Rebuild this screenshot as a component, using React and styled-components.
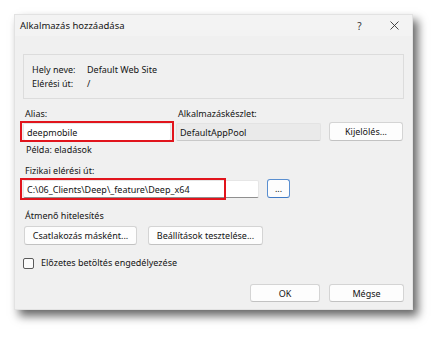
import React from "react";
import styled, { createGlobalStyle } from "styled-components";

const GlobalStyle = createGlobalStyle`
  html, body {
    margin: 0;
    padding: 0;
    background: #ffffff;
  }
  body {
    font-family: "Noto Sans", "Open Sans", sans-serif;
    font-size: 9px;
    color: #141414;
  }
`;

const Page = styled.div`
  width: 441px;
  height: 339px;
  padding: 14px 0 0 14px;
  box-sizing: border-box;
`;

const Dialog = styled.div`
  width: 399px;
  height: 296px;
  background: #f0f0f0;
  border: 1px solid #e2e2e2;
  box-sizing: border-box;
  box-shadow: 5px 6px 9px rgba(0, 0, 0, 0.6);
  display: flex;
  flex-direction: column;
`;

const TitleBar = styled.div`
  height: 21px;
  display: flex;
  align-items: center;
  padding-left: 5px;
  background: #f3f3f3;
`;

const Title = styled.div`
  flex: 1;
  font-size: 9.5px;
`;

const TitleButton = styled.div`
  width: 35px;
  height: 21px;
  display: flex;
  align-items: center;
  justify-content: center;
  font-size: 10px;
  color: #333;
`;

const Body = styled.div`
  padding: 18px 8px 0 8px;
  display: flex;
  flex-direction: column;
`;

const InfoBox = styled.div`
  border: 1px solid #dcdcdc;
  padding: 8px 8px 7px 8px;
`;

const InfoRow = styled.div`
  display: flex;
  line-height: 14px;
`;

const InfoLabel = styled.div`
  width: 55px;
`;

const Label = styled.div`
  line-height: 14px;
  padding-left: 2px;
  margin-top: ${(p) => p.$mt || 0}px;
`;

const FieldRow = styled.div`
  display: flex;
  align-items: flex-end;
  margin-top: ${(p) => p.$mt || 0}px;
  gap: ${(p) => p.$gap || 5}px;
`;

const Field = styled.div`
  width: ${(p) => p.$w}px;
  display: flex;
  flex-direction: column;
  gap: 2px;
`;

const Marked = styled.div`
  position: relative;
  width: ${(p) => p.$w}px;
`;

const Highlight = styled.div`
  position: absolute;
  left: -3px;
  top: -2px;
  width: ${(p) => p.$w}px;
  height: ${(p) => p.$h}px;
  border: 2px solid #e1141c;
  box-sizing: border-box;
  pointer-events: none;
`;

const Input = styled.div`
  height: 18px;
  box-sizing: border-box;
  padding-left: 3px;
  display: flex;
  align-items: center;
  background: ${(p) => (p.$disabled ? "#eaeaea" : "#ffffff")};
  border: 1px solid ${(p) => (p.$disabled ? "#e3e3e3" : "#e6e6e6")};
  border-bottom-color: ${(p) => (p.$disabled ? "#c9c9c9" : "#8f8f8f")};
  border-radius: 2px;
  white-space: nowrap;
  overflow: hidden;
`;

const Button = styled.div`
  width: ${(p) => p.$w}px;
  height: ${(p) => p.$h || 19}px;
  margin-left: ${(p) => p.$ml || 0}px;
  box-sizing: border-box;
  display: flex;
  align-items: center;
  justify-content: center;
  background: #fdfdfd;
  border: 1px solid ${(p) => (p.$focus ? "#5a8fd0" : "#d4d4d4")};
  border-bottom-color: ${(p) => (p.$focus ? "#3f7ac4" : "#c2c2c2")};
  border-radius: 3px;
  white-space: nowrap;
`;

const Hint = styled.div`
  line-height: 14px;
  margin-top: 2px;
  padding-left: 3px;
`;

const CheckRow = styled.div`
  display: flex;
  align-items: center;
  gap: 7px;
  line-height: 14px;
  margin-top: 11px;
`;

const CheckBox = styled.div`
  width: 11px;
  height: 11px;
  box-sizing: border-box;
  border: 1px solid #5a5a5a;
  border-radius: 2px;
  background: #fbfbfb;
`;

const Footer = styled.div`
  display: flex;
  justify-content: flex-end;
  gap: 9px;
  margin-top: 14px;
`;

export default function App() {
  return (
    <Page>
      <GlobalStyle />
      <Dialog>
        <TitleBar>
          <Title>Alkalmazás hozzáadása</Title>
          <TitleButton>?</TitleButton>
          <TitleButton>
            <svg width="9" height="9" viewBox="0 0 9 9">
              <path d="M0.5 0.5 L8.5 8.5 M8.5 0.5 L0.5 8.5" stroke="#333" strokeWidth="0.9" />
            </svg>
          </TitleButton>
        </TitleBar>
        <Body>
          <InfoBox>
            <InfoRow>
              <InfoLabel>Hely neve:</InfoLabel>
              <div>Default Web Site</div>
            </InfoRow>
            <InfoRow>
              <InfoLabel>Elérési út:</InfoLabel>
              <div>/</div>
            </InfoRow>
          </InfoBox>

          <FieldRow $mt={8}>
            <Field $w={148}>
              <Label>Alias:</Label>
              <Marked $w={148}>
                <Input>deepmobile</Input>
                <Highlight $w={154} $h={21} />
              </Marked>
            </Field>
            <Field $w={145}>
              <Label>Alkalmazáskészlet:</Label>
              <Input $disabled>DefaultAppPool</Input>
            </Field>
            <Button $w={74} $ml={3}>Kijelölés...</Button>
          </FieldRow>
          <Hint>Példa: eladások</Hint>

          <Label $mt={7}>Fizikai elérési út:</Label>
          <FieldRow $mt={1} $gap={8}>
            <Marked $w={236}>
              <Input>C:\06_Clients\Deep\_feature\Deep_x64</Input>
              <Highlight $w={206} $h={22} />
            </Marked>
            <Button $w={23} $focus>...</Button>
          </FieldRow>

          <Label $mt={11}>Átmenő hitelesítés</Label>
          <FieldRow $mt={3} $gap={11}>
            <Button $w={113} $ml={1}>Csatlakozás másként...</Button>
            <Button $w={115}>Beállítások tesztelése...</Button>
          </FieldRow>

          <CheckRow>
            <CheckBox />
            <span>Előzetes betöltés engedélyezése</span>
          </CheckRow>

          <Footer>
            <Button $w={70} $h={18}>OK</Button>
            <Button $w={75} $h={18}>Mégse</Button>
          </Footer>
        </Body>
      </Dialog>
    </Page>
  );
}
